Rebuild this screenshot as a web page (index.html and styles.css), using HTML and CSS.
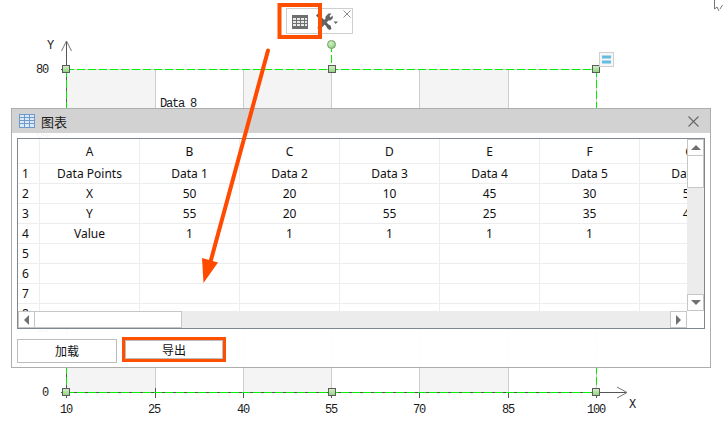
FILE: index.html
```html
<!DOCTYPE html>
<html lang="zh">
<head>
<meta charset="utf-8">
<title>图表</title>
<link rel="stylesheet" href="styles.css">
</head>
<body>
<div class="stage">
  <svg class="canvas" width="723" height="421" viewBox="0 0 723 421">
    <defs>
      <linearGradient id="g" x1="0" y1="0" x2="0" y2="1"><stop offset="0" stop-color="#d4f0c8"/><stop offset="1" stop-color="#8fd27f"/></linearGradient>
      <radialGradient id="c" cx=".4" cy=".35" r=".7"><stop offset="0" stop-color="#d4f0c8"/><stop offset="1" stop-color="#86cc75"/></radialGradient>
    </defs>
    <g fill="#f4f4f4"><rect x="66" y="69" width="89" height="323"/><rect x="243" y="69" width="88" height="323"/><rect x="419" y="69" width="89" height="323"/></g>
    <g stroke="#cdcdcd" fill="none"><path d="M155.5 69V392M243.5 69V392M331.5 69V392M419.5 69V392M508.5 69V392M596.5 69V392M66 69.5H596"/></g>
    <g stroke="#555" fill="none">
      <path d="M66.5 41V392M66 392.5H626"/>
      <path d="M61.5 51L66.5 41L71.5 51M617 387L627 392.5L617 398" stroke="#777"/>
      <path d="M61 69.5H66M61 392.5H66M66.5 392V398M155.5 388V398M243.5 392V398M331.5 392V398M419.5 392V398M508.5 392V398M596.5 392V398"/>
    </g>
    <g stroke="#00f000" fill="none" stroke-dasharray="8 3"><path d="M66.5 69V392M596.5 69V392M66 69.5H596M66 392.5H596M331.5 44V69"/></g>
    <g class="axis">
      <text x="50" y="49" text-anchor="middle">Y</text><text x="632" y="408" text-anchor="middle">X</text>
      <text x="48" y="73" text-anchor="end">80</text><text x="48" y="138" text-anchor="end">64</text><text x="48" y="332" text-anchor="end">16</text><text x="48" y="396" text-anchor="end">0</text>
      <text x="66" y="413" text-anchor="middle">10</text><text x="154" y="413" text-anchor="middle">25</text><text x="243" y="413" text-anchor="middle">40</text><text x="331" y="413" text-anchor="middle">55</text><text x="419" y="413" text-anchor="middle">70</text><text x="508" y="413" text-anchor="middle">85</text><text x="596" y="413" text-anchor="middle">100</text>
      <text x="160" y="107">Data 8</text>
    </g>
    <g stroke="#5b5b5b" fill="url(#g)">
      <rect x="62.5" y="65.5" width="7" height="7"/><rect x="328.5" y="65.5" width="7" height="7"/><rect x="592.5" y="65.5" width="7" height="7"/>
      <rect x="62.5" y="388.5" width="7" height="7"/><rect x="328.5" y="388.5" width="7" height="7"/><rect x="592.5" y="388.5" width="7" height="7"/>
    </g>
    <circle cx="331.5" cy="44.5" r="4" fill="url(#c)" stroke="#7aa070"/>
    <rect x="599.5" y="52.5" width="14" height="14" fill="#f6f6f6" stroke="#cfcfcf"/>
    <path d="M602 57H611M602 62H611" stroke="#63bde0" stroke-width="3"/>
    <path d="M602 59.500H611" stroke="#f6f6f6"/>
    <path d="M714.500 0L714.500 9L717 7L719 11M720 9L722.500 5" fill="none" stroke="#777"/>
  </svg>

  <div class="toolbar">
    <svg class="tool-grid" width="16" height="14" viewBox="0 0 16 14"><path d="M0 0H16V14H0Z" fill="#6f6f6f"/><path d="M1 3h3v2H1zM5 3h3v2H5zM9 3h3v2H9zM13 3h2v2h-2zM1 6h3v2H1zM5 6h3v2H5zM9 6h3v2H9zM13 6h2v2h-2zM1 9h3v2H1zM5 9h3v2H5zM9 9h3v2H9zM13 9h2v2h-2z" fill="#e9e9e9"/></svg>
    <svg class="tool-wrench" width="24" height="18" viewBox="0 0 24 18"><path d="M1 2.500L3 .5L13.500 11.500L15.500 12.500L16.500 16L14.500 17L12 15L11.500 13.500Z" fill="#5c5c5c"/><path d="M13.500 .5L16.500 .5L14.500 3L15.500 4.500L17.500 2.500L18 5L15.500 7.500L13.500 7.500L5.500 16L3 16.500L2.500 14L10.500 5.500L10.500 3.500Z" fill="#666"/><path d="M18.500 8.500H23L20.750 11Z" fill="#666"/></svg>
    <svg class="tool-close" width="8" height="8" viewBox="0 0 8 8"><path d="M.5.500L7.500 7.500M7.500.500L.5 7.500" stroke="#8a8a8a" fill="none"/></svg>
  </div>

  <section class="dialog">
    <header class="titlebar">
      <svg class="title-icon" width="16" height="14" viewBox="0 0 16 14"><rect x=".5" y=".5" width="15" height="13" fill="#dbe8f5" stroke="#6e9acb"/><path d="M.5 3.500H15.500M.5 6.500H15.500M.5 9.500H15.500M5.500 .5V13.500M10.500 .5V13.500" stroke="#6e9acb" fill="none"/></svg>
      <span class="title-text">图表</span>
      <svg class="title-close" width="11" height="11" viewBox="0 0 11 11"><path d="M.5.500L10.500 10.500M10.500.5L.5 10.500" stroke="#6a6a6a" stroke-width="1.200" fill="none"/></svg>
    </header>
    <div class="body">
      <div class="sheet">
        <div class="viewport">
          <table class="grid">
            <tr class="head"><th class="rowhead"></th><th>A</th><th>B</th><th>C</th><th>D</th><th>E</th><th>F</th><th>G</th></tr>
            <tr><th class="rowhead">1</th><td>Data Points</td><td>Data 1</td><td>Data 2</td><td>Data 3</td><td>Data 4</td><td>Data 5</td><td>Data 6</td></tr>
            <tr><th class="rowhead">2</th><td>X</td><td>50</td><td>20</td><td>10</td><td>45</td><td>30</td><td>55</td></tr>
            <tr><th class="rowhead">3</th><td>Y</td><td>55</td><td>20</td><td>55</td><td>25</td><td>35</td><td>40</td></tr>
            <tr><th class="rowhead">4</th><td>Value</td><td>1</td><td>1</td><td>1</td><td>1</td><td>1</td><td>1</td></tr>
            <tr><th class="rowhead">5</th><td></td><td></td><td></td><td></td><td></td><td></td><td></td></tr>
            <tr><th class="rowhead">6</th><td></td><td></td><td></td><td></td><td></td><td></td><td></td></tr>
            <tr><th class="rowhead">7</th><td></td><td></td><td></td><td></td><td></td><td></td><td></td></tr>
            <tr><th class="rowhead">8</th><td></td><td></td><td></td><td></td><td></td><td></td><td></td></tr>
          </table>
        </div>
        <div class="vscroll">
          <div class="sb-btn"><span class="tri tri-up"></span></div>
          <div class="sb-thumb-v"></div>
          <div class="sb-track"></div>
          <div class="sb-btn"><span class="tri tri-down"></span></div>
        </div>
        <div class="hscroll">
          <div class="sb-btn"><span class="tri tri-left"></span></div>
          <div class="sb-thumb-h"></div>
          <div class="sb-track"></div>
          <div class="sb-btn"><span class="tri tri-right"></span></div>
        </div>
        <div class="corner"></div>
      </div>
      <footer class="actions">
        <button class="btn">加载</button>
        <div class="mark"><button class="btn btn-inner">导出</button></div>
      </footer>
    </div>
  </section>

  <svg class="annot" width="723" height="421" viewBox="0 0 723 421">
    <rect x="279.500" y="5" width="40.500" height="32" fill="none" stroke="#ff4f00" stroke-width="4"/>
    <path d="M268 50.500L211 260" stroke="#ff4a00" stroke-width="4" stroke-linecap="round" fill="none"/>
    <path d="M202 258L218 262.500L203.500 283Z" fill="#ff4a00"/>
  </svg>
</div>
</body>
</html>
```

FILE: styles.css
```css
* { box-sizing: border-box; }
html, body { margin: 0; padding: 0; background: #fff; }
.stage { position: relative; width: 723px; height: 421px; overflow: hidden; font-family: "Noto Sans", "Noto Sans CJK SC", sans-serif; }
.canvas, .annot { position: absolute; left: 0; top: 0; }
.annot { pointer-events: none; }
.axis text { font-family: "Liberation Mono", monospace; font-size: 12px; letter-spacing: -1.2px; fill: #1a1a1a; }

.toolbar { position: absolute; left: 286px; top: 8px; width: 67px; height: 26px; background: #fff; border: 1px solid #cfcfcf; }
.tool-grid { position: absolute; left: 5px; top: 6px; }
.tool-wrench { position: absolute; left: 28px; top: 4px; }
.tool-close { position: absolute; left: 56px; top: 1px; }

.dialog { position: absolute; left: 11px; top: 108px; width: 700px; height: 260px; background: rgba(255,255,255,.96); border: 1px solid #adadad; display: flex; flex-direction: column; }
.titlebar { height: 24px; flex: none; background: #d2d2d2; display: flex; align-items: center; padding: 0 11px 0 7px; }
.title-text { margin-left: 6px; font-size: 13px; color: #1c1c1c; font-family: "Noto Sans CJK SC", sans-serif; }
.title-close { margin-left: auto; }
.body { flex: 1; padding: 5px 5px 0; display: flex; flex-direction: column; }

.sheet { width: 688px; height: 191px; flex: none; background: #fff; border: 1px solid #80878f; display: grid; grid-template-columns: 669px 17px; grid-template-rows: 172px 17px; }
.viewport { overflow: hidden; grid-column: 1; grid-row: 1; }
.grid { border-collapse: separate; border-spacing: 0; table-layout: fixed; width: 722px; font-size: 12px; color: #111; }
.grid th, .grid td { width: 100px; height: 20px; padding: 0; border-right: 1px solid #ededed; border-bottom: 1px solid #ededed; text-align: center; font-weight: 400; white-space: nowrap; overflow: hidden; }
.grid .rowhead { width: 22px; text-align: left; padding-left: 4px; }
.grid .head th { height: 25px; }

.vscroll { grid-column: 2; grid-row: 1; display: flex; flex-direction: column; background: #ececec; }
.hscroll { grid-column: 1; grid-row: 2; display: flex; background: #ececec; }
.corner { grid-column: 2; grid-row: 2; background: #fff; }
.sb-btn { width: 17px; height: 17px; flex: none; background: #fff; border: 1px solid #c6c6c6; display: flex; align-items: center; justify-content: center; }
.sb-thumb-v { height: 32px; flex: none; background: #fff; border: 1px solid #c6c6c6; border-top: 0; }
.sb-thumb-h { width: 147px; flex: none; background: #fff; border: 1px solid #c6c6c6; border-left: 0; }
.sb-track { flex: 1; background: #ececec; }
.tri { width: 0; height: 0; border-style: solid; border-color: transparent; }
.tri-up { border-width: 0 5px 5px; border-bottom-color: #707070; }
.tri-down { border-width: 5px 5px 0; border-top-color: #707070; }
.tri-left { border-width: 5px 5px 5px 0; border-right-color: #707070; }
.tri-right { border-width: 5px 0 5px 5px; border-left-color: #707070; }

.actions { display: flex; align-items: flex-start; gap: 5px; margin-top: 8px; }
.btn { width: 100px; height: 24px; margin-top: 2px; padding: 0 0 2px; background: #fff; border: 1px solid #bdbdbd; font: 12px "Noto Sans CJK SC", sans-serif; color: #111; }
.mark { width: 104px; height: 25px; border: 3px solid #ff4f00; display: flex; }
.btn-inner { width: 100%; height: 100%; margin: 0; }
```
